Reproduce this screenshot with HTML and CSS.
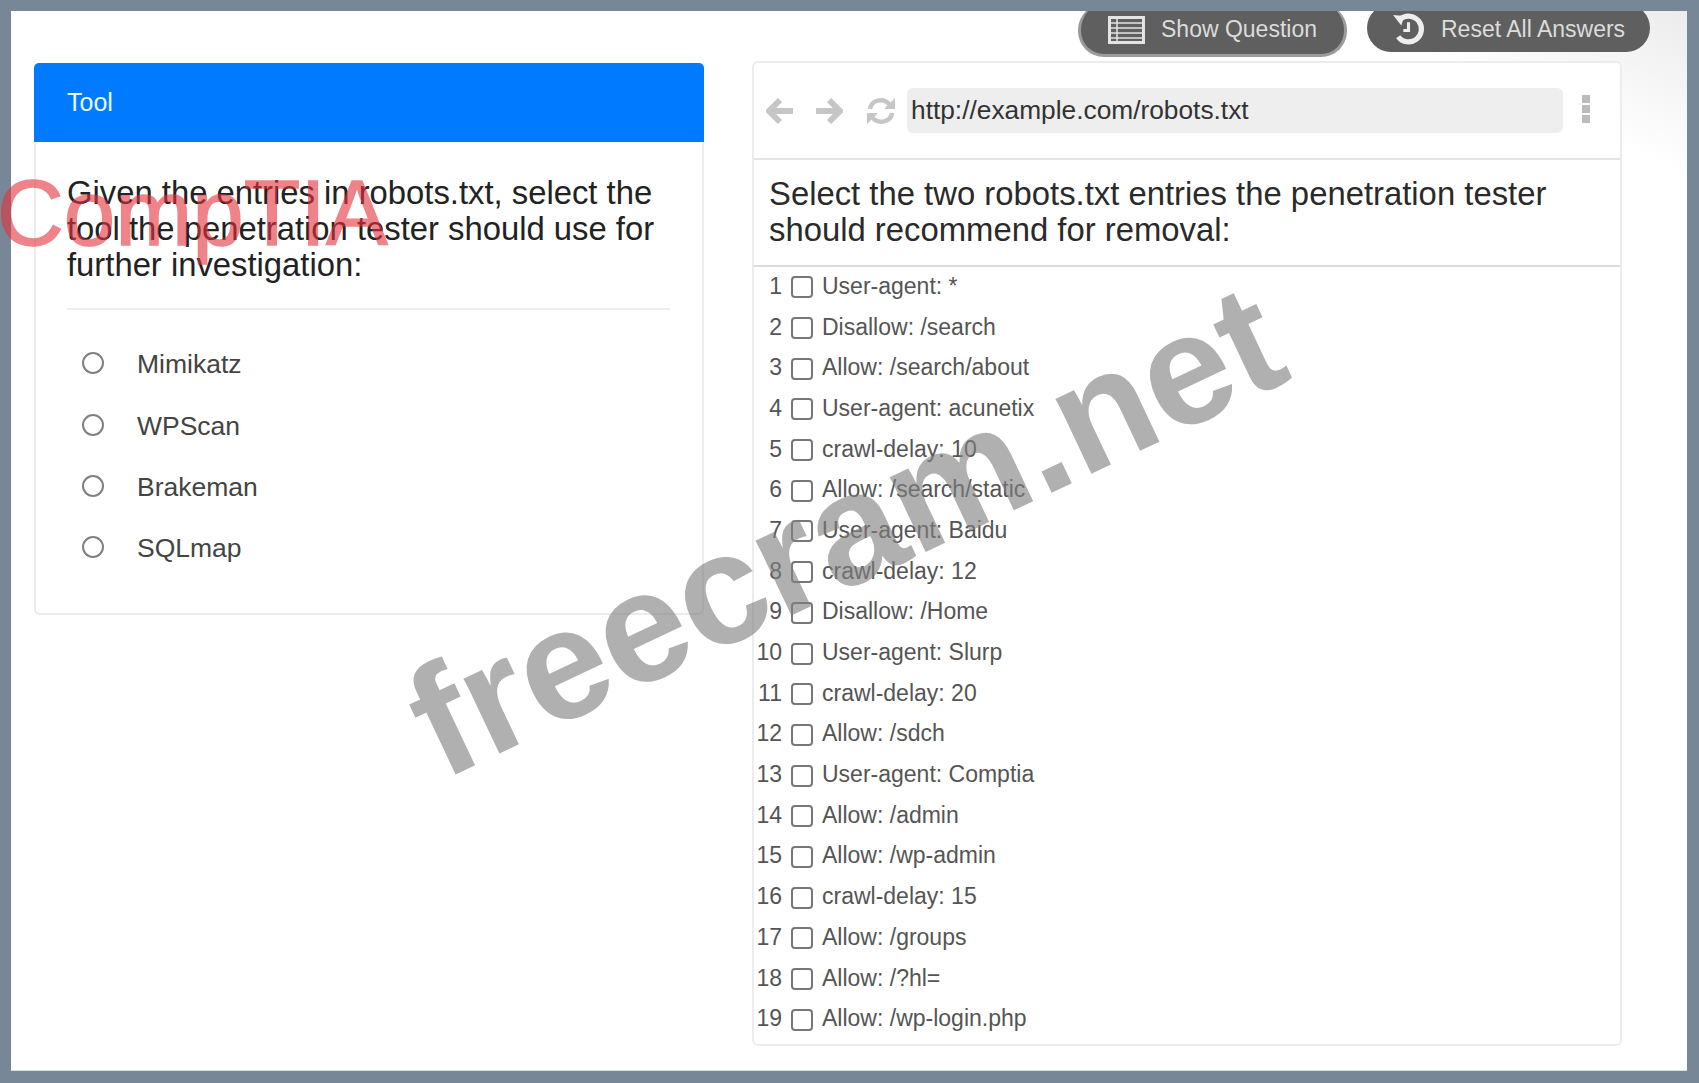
FILE: index.html
```html
<!DOCTYPE html>
<html lang="en">
<head>
<meta charset="utf-8">
<title>Robots.txt question</title>
<link rel="stylesheet" href="styles.css">
</head>
<body>
<main class="frame">
  <div class="topbar">
    <button class="pill pill-show">
      <svg class="pill-icon-list" viewBox="0 0 37 28"><rect x="1.5" y="1.5" width="34" height="25" fill="none" stroke="#e4e4e4" stroke-width="3"/><path d="M3 7h31M3 12h31M3 17h31M3 22h31" stroke="#e4e4e4" stroke-width="1.6"/><path d="M9 3v22" stroke="#e4e4e4" stroke-width="1.5"/></svg>
      <span>Show Question</span>
    </button>
    <button class="pill pill-reset">
      <svg class="pill-icon-history" viewBox="0 0 32 32"><path d="M8 6A12.5 12.5 0 1 1 6 23" fill="none" stroke="#eee" stroke-width="5"/><path d="M1 2l11 1-3 9z" fill="#eee"/><path d="M16 9v8h-5" fill="none" stroke="#eee" stroke-width="3"/></svg>
      <span>Reset All Answers</span>
    </button>
  </div>
  <div class="columns">
    <section class="card tool">
      <header class="tool-head">Tool</header>
      <div class="tool-body">
        <h2 class="prompt">Given the entries in robots.txt, select the tool the penetration tester should use for further investigation:</h2>
        <hr class="rule">
        <ul class="radios">
          <li class="radio-row"><span class="radio"></span>Mimikatz</li>
          <li class="radio-row"><span class="radio"></span>WPScan</li>
          <li class="radio-row"><span class="radio"></span>Brakeman</li>
          <li class="radio-row"><span class="radio"></span>SQLmap</li>
        </ul>
      </div>
    </section>
    <section class="card browser">
      <div class="toolbar">
        <svg class="nav-icon" viewBox="0 0 28 28"><path d="M14 3L3 14l11 11M4 14h23" fill="none" stroke="#c6c6c6" stroke-width="6"/></svg>
        <svg class="nav-icon nav-forward" viewBox="0 0 28 28"><path d="M14 3l11 11-11 11M24 14H1" fill="none" stroke="#c6c6c6" stroke-width="6"/></svg>
        <svg class="nav-refresh" viewBox="0 0 30 28"><path d="M4 12C5 3 18 0 24 8M26 16c-1 9-14 12-20 4" fill="none" stroke="#c6c6c6" stroke-width="4.5"/><path d="M29 1v11H18zM1 27V16h11z" fill="#c6c6c6"/></svg>
        <div class="url">http://example.com/robots.txt</div>
        <div class="dots"><i></i><i></i><i></i></div>
      </div>
      <h2 class="browser-prompt">Select the two robots.txt entries the penetration tester should recommend for removal:</h2>
      <ol class="entries">
        <li class="entry"><span class="num">1</span><span class="check"></span>User-agent: *</li>
        <li class="entry"><span class="num">2</span><span class="check"></span>Disallow: /search</li>
        <li class="entry"><span class="num">3</span><span class="check"></span>Allow: /search/about</li>
        <li class="entry"><span class="num">4</span><span class="check"></span>User-agent: acunetix</li>
        <li class="entry"><span class="num">5</span><span class="check"></span>crawl-delay: 10</li>
        <li class="entry"><span class="num">6</span><span class="check"></span>Allow: /search/static</li>
        <li class="entry"><span class="num">7</span><span class="check"></span>User-agent: Baidu</li>
        <li class="entry"><span class="num">8</span><span class="check"></span>crawl-delay: 12</li>
        <li class="entry"><span class="num">9</span><span class="check"></span>Disallow: /Home</li>
        <li class="entry"><span class="num">10</span><span class="check"></span>User-agent: Slurp</li>
        <li class="entry"><span class="num">11</span><span class="check"></span>crawl-delay: 20</li>
        <li class="entry"><span class="num">12</span><span class="check"></span>Allow: /sdch</li>
        <li class="entry"><span class="num">13</span><span class="check"></span>User-agent: Comptia</li>
        <li class="entry"><span class="num">14</span><span class="check"></span>Allow: /admin</li>
        <li class="entry"><span class="num">15</span><span class="check"></span>Allow: /wp-admin</li>
        <li class="entry"><span class="num">16</span><span class="check"></span>crawl-delay: 15</li>
        <li class="entry"><span class="num">17</span><span class="check"></span>Allow: /groups</li>
        <li class="entry"><span class="num">18</span><span class="check"></span>Allow: /?hl=</li>
        <li class="entry"><span class="num">19</span><span class="check"></span>Allow: /wp-login.php</li>
      </ol>
    </section>
  </div>
</main>
<div class="mark-comptia">CompTIA</div>
<div class="mark-freecram">freecram.net</div>
</body>
</html>
```
FILE: styles.css
```css
* { box-sizing: border-box; }
html, body { margin: 0; height: 100%; }
body {
  background: #778797;
  font-family: "Liberation Sans", Arial, sans-serif;
  padding: 11px 12px 12px 11px;
  overflow: hidden;
}
.frame {
  position: relative;
  height: 1060px;
  overflow: hidden;
  background: linear-gradient(205deg, #ececec 0, #fff 9%);
  border-bottom: 1px solid #d8dde0;
}
.topbar {
  display: flex;
  justify-content: flex-end;
  gap: 20px;
  height: 50px;
  padding-right: 37px;
}
.pill {
  display: flex;
  align-items: center;
  height: 48px;
  margin-top: -7px;
  padding: 3px 0 0;
  border: 0;
  border-radius: 24px;
  background: #5f5f5f;
  color: #dcdcdc;
  font: 23px "Liberation Sans", Arial, sans-serif;
}
.pill-show {
  width: 269px;
  height: 53px;
  padding-left: 27px;
  border: 3px solid #9b9b9b;
  border-top: 0;
  padding-top: 1px;
  border-radius: 26px;
}
.pill-reset {
  width: 283px;
  padding-left: 25px;
}
.pill-icon-list { width: 37px; height: 28px; margin-right: 16px; flex: none; }
.pill-icon-history { width: 33px; height: 33px; margin-right: 16px; flex: none; }
.columns {
  display: flex;
  align-items: flex-start;
  gap: 48px;
  padding-left: 23px;
}
.card {
  background: #fff;
  border: 2px solid #ececec;
  border-radius: 6px;
}
.tool {
  width: 670px;
  margin-top: 2px;
  border-width: 0 2px 2px;
}
.tool-head {
  height: 79px;
  margin: 0 -2px;
  padding: 25px 0 0 33px;
  background: #007bff;
  border-radius: 5px 5px 0 0;
  color: #e6fbff;
  font-size: 25px;
  line-height: 28px;
}
.tool-body { padding: 33px 32px 33px 31px; }
.prompt {
  margin: 0;
  color: #222;
  font-size: 32.8px;
  font-weight: 400;
  line-height: 36px;
}
.rule {
  height: 2px;
  margin: 25px 0 0;
  border: 0;
  background: #eeeeee;
}
.radios { margin: 24px 0 0; padding: 0; list-style: none; }
.radio-row {
  display: flex;
  align-items: center;
  height: 61.4px;
  padding-left: 15px;
  color: #444;
  font-size: 26.5px;
}
.radio {
  width: 22px;
  height: 22px;
  margin-right: 33px;
  margin-top: -3px;
  border: 2px solid #808080;
  border-radius: 50%;
  flex: none;
}
.browser { width: 870px; }
.toolbar {
  display: flex;
  align-items: center;
  height: 97px;
  padding-left: 12px;
  border-bottom: 2px solid #e4e4e4;
}
.nav-icon { width: 28px; height: 28px; flex: none; }
.nav-forward { margin-left: 21px; }
.nav-refresh { width: 30px; height: 28px; margin: 0 11px 0 23px; flex: none; }
.url {
  width: 656px;
  height: 45px;
  padding-left: 4px;
  background: #eeeeee;
  border-radius: 6px;
  color: #333;
  font-size: 26.3px;
  line-height: 45px;
}
.dots {
  display: flex;
  flex-direction: column;
  gap: 2px;
  margin-left: 19px;
  margin-top: -4px;
}
.dots i { display: block; width: 8px; height: 8px; background: #bcbcbc; }
.browser-prompt {
  height: 107px;
  margin: 0;
  padding: 16px 15px 0;
  border-bottom: 2px solid #dcdcdc;
  color: #2a2a2a;
  font-size: 32.85px;
  font-weight: 400;
  line-height: 36px;
}
.entries { margin: -1px 0 0; padding: 0 0 5px; list-style: none; }
.entry {
  display: flex;
  align-items: center;
  height: 40.7px;
  color: #555;
  font-size: 23px;
}
.num { width: 28px; text-align: right; flex: none; }
.check {
  width: 22px;
  height: 22px;
  margin: 2px 9px 0 9px;
  border: 2px solid #777;
  border-radius: 4px;
  flex: none;
}
.mark-comptia {
  position: absolute;
  left: -3px;
  top: 163px;
  color: #e4323c;
  font-size: 92.5px;
  line-height: 100px;
  -webkit-text-stroke: 1.5px #e4323c;
  white-space: nowrap;
  opacity: 0.6;
}
.mark-freecram {
  position: absolute;
  left: 845px;
  top: 530px;
  color: #808080;
  font-size: 157px;
  font-weight: 700;
  line-height: 1;
  white-space: nowrap;
  transform: translate(-50%, -50%) rotate(-25.3deg);
  opacity: 0.62;
}
```
